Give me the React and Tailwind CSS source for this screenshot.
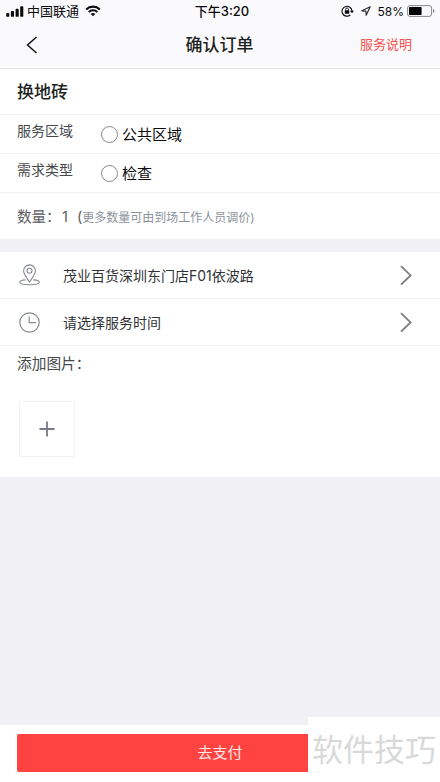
function SignalIcon() {
  return (
    <svg className="h-[11px] w-[18px]" viewBox="0 0 18 11" fill="#0b0b0d">
      <rect x="0.2" y="7" width="3.1" height="3.8" rx="0.9" />
      <rect x="4.9" y="5" width="3.1" height="5.8" rx="0.9" />
      <rect x="9.6" y="2.8" width="3.1" height="8" rx="0.9" />
      <rect x="14.2" y="0.3" width="3.1" height="10.5" rx="0.9" />
    </svg>
  )
}

function WifiIcon() {
  return (
    <svg className="h-[12px] w-[16px]" viewBox="0 0 16 12" fill="none" stroke="#0b0b0d">
      <path d="M1.2 4.4a9.8 9.8 0 0 1 13.6 0" strokeWidth="2.1" />
      <path d="M3.7 7a6.2 6.2 0 0 1 8.6 0" strokeWidth="2" />
      <path d="M8 11.2 5.8 9a3.1 3.1 0 0 1 4.4 0z" fill="#0b0b0d" stroke="none" />
    </svg>
  )
}

function RotationLockIcon() {
  return (
    <svg className="h-[12px] w-[13px]" viewBox="0 0 13 12" fill="none" stroke="#0b0b0d">
      <path d="M9.3 10A5 5 0 1 1 11 6" strokeWidth="1.1" />
      <path d="M9 5.8h4l-2 2.4z" fill="#0b0b0d" stroke="none" />
      <rect x="3.8" y="5.3" width="4.5" height="3.4" rx="0.4" fill="#0b0b0d" stroke="none" />
      <path d="M4.7 5.5V4.3a1.35 1.35 0 0 1 2.7 0v1.2" strokeWidth="0.9" />
    </svg>
  )
}

function LocationIcon() {
  return (
    <svg className="h-[10px] w-[10px]" viewBox="0 0 10 10" fill="none" stroke="#2b2b2e" strokeLinejoin="round">
      <path d="M9.2.8.9 4.8l4 .4.3 4z" strokeWidth="1.2" />
    </svg>
  )
}

function BatteryIcon() {
  return (
    <svg className="h-[12px] w-[28px]" viewBox="0 0 28 12" fill="none">
      <rect x="0.6" y="0.6" width="24" height="10.8" rx="2.4" stroke="#88888c" />
      <rect x="2" y="2" width="12.6" height="8" rx="0.8" fill="#050506" />
      <path d="M26 4v4c.9-.4 1.4-1.1 1.4-2S26.9 4.4 26 4z" fill="#88888c" />
    </svg>
  )
}

function PinIcon() {
  return (
    <svg className="h-[22px] w-[21px]" viewBox="0 0 21 22" fill="none" stroke="#868a8f" strokeWidth="1.1">
      <path d="M10.5 18C8 14.2 4.6 10.3 4.6 6.8a5.9 5.9 0 0 1 11.8 0c0 3.5-3.4 7.4-5.9 11.2z" />
      <circle cx="10.5" cy="6.8" r="2.5" />
      <path d="M6.6 15.9C3.2 16.1.8 17 .8 18.3c0 1.5 4.3 2.5 9.7 2.5s9.7-1 9.7-2.5c0-1.3-2.4-2.2-5.8-2.4" />
    </svg>
  )
}

function ClockIcon() {
  return (
    <svg className="h-[21px] w-[21px]" viewBox="0 0 21 21" fill="none" stroke="#868a8f" strokeWidth="1.2">
      <circle cx="10.5" cy="10.5" r="9.7" />
      <path d="M10.2 4.5v6.2h6.8" />
    </svg>
  )
}

function ChevronRight() {
  return (
    <svg className="ml-auto h-[20px] w-[12px]" viewBox="0 0 12 20" fill="none" stroke="#797d82" strokeWidth="1.8">
      <path d="M1 1.2 10.600 10.400 1 19.600" />
    </svg>
  )
}

function OptionRow({ label, option }) {
  return (
    <div className="flex h-[39px] border-b border-[#f0f0f2] pl-[17px]">
      <span className="w-[84px] pt-[5px] text-[14px] leading-[22px] text-[#46484c]">{label}</span>
      <label className="flex h-[38px] items-center">
        <span className="h-[17px] w-[17px] rounded-full border border-[#85878a]" />
        <span className="mt-px ml-[4px] text-[15px] leading-[22px] text-[#0c0c0d]">{option}</span>
      </label>
    </div>
  )
}

function LinkRow({ icon, children }) {
  return (
    <div className="flex h-[47px] items-center border-b border-[#f0f0f2] pr-[28px] pl-[19px]">
      {icon}
      <span className="ml-[23px] text-[14px] text-[#303236]">{children}</span>
      <ChevronRight />
    </div>
  )
}

export default function App() {
  return (
    <div className="relative flex h-[782px] w-[440px] flex-col overflow-hidden bg-[#f0f0f5] font-['Inter','Noto_Sans_CJK_SC',sans-serif] whitespace-nowrap">
      <header className="h-[69px] border-b border-[#e6e6e9] bg-[#fafafc]">
        <div className="grid h-[22px] grid-cols-3 items-center text-[#0b0b0d]">
          <div className="flex items-center pl-[6px]">
            <SignalIcon />
            <span className="ml-[3px] text-[13px] leading-[20px]">中国联通</span>
            <span className="ml-[6px]"><WifiIcon /></span>
          </div>
          <span className="pl-[4px] text-center text-[13px] leading-[20px] font-medium">下午3:20</span>
          <div className="flex items-center justify-end pr-[5px]">
            <RotationLockIcon />
            <span className="ml-[7px]"><LocationIcon /></span>
            <span className="ml-[6px] pt-px text-[12px] leading-[20px]">58%</span>
            <span className="ml-[3px]"><BatteryIcon /></span>
          </div>
        </div>
        <div className="grid h-[46px] grid-cols-3 items-center">
          <svg className="ml-[26px] h-[18px] w-[12px]" viewBox="0 0 12 18" fill="none" stroke="#111214" strokeWidth="1.5">
            <path d="M10.5 1 1.5 9l9 8" />
          </svg>
          <h1 className="pr-px text-center text-[17px] leading-[24px] font-medium text-[#1d1f22]">确认订单</h1>
          <span className="pr-[28px] text-right text-[13px] text-[#f5504f]">服务说明</span>
        </div>
      </header>

      <section className="h-[170px] bg-white">
        <h2 className="flex h-[46px] items-center border-b border-[#f0f0f2] pt-[2px] pl-[17px] text-[17px] font-medium text-[#1d1f22]">换地砖</h2>
        <OptionRow label="服务区域" option="公共区域" />
        <OptionRow label="需求类型" option="检查" />
        <div className="flex h-[46px] items-center pt-[2px] pl-[17px] text-[14.5px] text-[#5b5d61]">
          <span className="w-[45px]">数量：</span>
          <span className="w-[15px]">1</span>
          <span>(</span>
          <span className="pt-px text-[12px] text-[#8d929a]">更多数量可由到场工作人员调价)</span>
        </div>
      </section>

      <section className="mt-[13px] bg-white">
        <LinkRow icon={<PinIcon />}>茂业百货深圳东门店F01依波路</LinkRow>
        <LinkRow icon={<ClockIcon />}>请选择服务时间</LinkRow>
        <div className="h-[131px] pt-[7px] pl-[17px]">
          <p className="text-[14.7px] leading-[22px] text-[#46484c]">添加图片：</p>
          <button className="mt-[26px] ml-[2px] flex h-[56px] w-[56px] items-center justify-center border border-[#f3f3f5]">
            <svg className="h-[16px] w-[16px]" viewBox="0 0 16 16" stroke="#767b87" strokeWidth="1.8">
              <path d="M8 .5v15M.5 8h15" />
            </svg>
          </button>
        </div>
      </section>

      <footer className="mt-auto h-[57px] bg-white px-[17px] pt-[9px]">
        <button className="h-[38px] w-full rounded-[2px] bg-[#ff4340] text-[15px] text-[#ffe9e8]">去支付</button>
      </footer>

      <div className="absolute right-0 bottom-0 flex h-[65px] w-[132px] items-center bg-white pb-[2px] pl-[4px] font-['Noto_Sans_CJK_SC',sans-serif] text-[31px] text-[#d9d9d9]">
        软件技巧
      </div>
    </div>
  )
}
